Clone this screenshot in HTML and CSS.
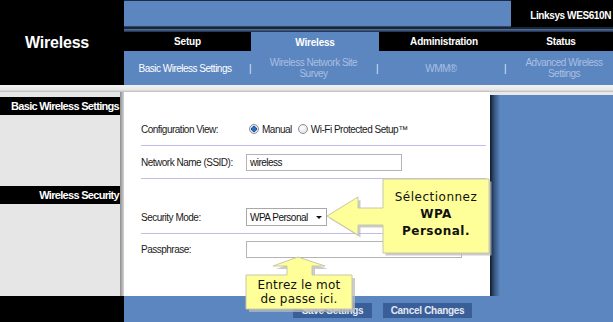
FILE: index.html
```html
<!DOCTYPE html>
<html lang="en">
<head>
<meta charset="utf-8">
<title>Wireless</title>
<link rel="stylesheet" href="styles.css">
</head>
<body>
<div class="page">
  <header class="brand-col"><h1 class="title">Wireless</h1></header>
  <div class="masthead">
    <div class="topbar"><div class="topbar-fill"></div><div class="model">Linksys WES610N</div></div>
    <div class="stripe"></div>
    <nav class="tabs">
      <div class="tab">Setup</div>
      <div class="tab active">Wireless</div>
      <div class="tab">Administration</div>
      <div class="tab">Status</div>
    </nav>
    <nav class="subnav">
      <div class="sub current">Basic Wireless Settings</div>
      <div class="sep">|</div>
      <div class="sub">Wireless Network Site<br>Survey</div>
      <div class="sep">|</div>
      <div class="sub">WMM®</div>
      <div class="sep">|</div>
      <div class="sub last">Advanced Wireless<br>Settings</div>
    </nav>
  </div>
  <div class="divider"></div>
  <aside class="sidebar">
    <div class="side-head">Basic Wireless Settings</div>
    <div class="side-head second">Wireless Security</div>
  </aside>
  <main class="content">
    <section class="form">
      <div class="row row-config">
        <span class="label">Configuration View:</span>
        <span class="radios">
          <span class="radio checked"></span><span class="rlabel">Manual</span>
          <span class="radio"></span><span class="rlabel">Wi-Fi Protected Setup™</span>
        </span>
      </div>
      <div class="rule r1"></div>
      <div class="row row-ssid">
        <span class="label">Network Name (SSID):</span>
        <span class="input ssid">wireless</span>
      </div>
      <div class="rule r2"></div>
      <div class="row row-mode">
        <span class="label">Security Mode:</span>
        <span class="select">WPA Personal<span class="caret"></span></span>
      </div>
      <div class="rule r3"></div>
      <div class="row row-pass">
        <span class="label">Passphrase:</span>
        <span class="input pass"></span>
      </div>
    </section>
    <div class="right-panel"></div>
  </main>
  <div class="foot-left"></div>
  <footer class="foot">
    <button class="btn save">Save Settings</button>
    <button class="btn cancel">Cancel Changes</button>
  </footer>

  <div class="callout callout-mode">
    <svg width="168" height="82" viewBox="0 0 168 82">
      <path d="M1,39 L32,20 L32,31 L57,31 L57,2 L163,2 L163,76 L57,76 L57,48 L32,48 L32,58 Z" fill="#b9b9b9" opacity="0.75" transform="translate(2.5,2.5)"/>
      <path d="M1,39 L32,20 L32,31 L57,31 L57,2 L163,2 L163,76 L57,76 L57,48 L32,48 L32,58 Z" fill="#ffff99" stroke="#c8c8a8" stroke-width="1"/>
    </svg>
    <div class="callout-text">Sélectionnez<br><b>WPA</b><br><b>Personal.</b></div>
  </div>
  <div class="callout callout-pass">
    <svg width="114" height="60" viewBox="0 0 114 60">
      <path d="M54,2 L81,11 L68,11 L68,20 L108,20 L108,54 L2,54 L2,20 L43,20 L43,11 L29,11 Z" fill="#b9b9b9" opacity="0.75" transform="translate(3,3)"/>
      <path d="M54,2 L81,11 L68,11 L68,20 L108,20 L108,54 L2,54 L2,20 L43,20 L43,11 L29,11 Z" fill="#ffff99" stroke="#c8c8a8" stroke-width="1"/>
    </svg>
    <div class="callout-text">Entrez le mot<br>de passe ici.</div>
  </div>
</div>
</body>
</html>
```

FILE: styles.css
```css
html, body {
  margin: 0;
  padding: 0;
  background: #fff;
}

.page {
  position: relative;
  width: 613px;
  height: 322px;
  display: grid;
  grid-template-columns: 124px 489px;
  grid-template-rows: 85px 7px 204px 26px;
  overflow: hidden;
  font-family: "Liberation Sans", Arial, sans-serif;
}

/* ---------- header ---------- */
.brand-col {
  background: #000;
  display: flex;
  align-items: center;
  justify-content: center;
  padding-right: 10px;
}

.title {
  margin: 0;
  font-size: 16px;
  font-weight: bold;
  color: #fff;
  letter-spacing: -0.2px;
}

.masthead {
  display: flex;
  flex-direction: column;
}

.topbar {
  height: 27px;
  display: flex;
}

.topbar-fill {
  flex: 1;
  background: #5c86bf;
  border-top: 1px solid #1d2b44;
  border-bottom: 1px solid #2f4566;
}

.model {
  width: 102px;
  box-sizing: border-box;
  background: #000;
  color: #fff;
  font-size: 10px;
  font-weight: bold;
  letter-spacing: -0.4px;
  display: flex;
  align-items: center;
  justify-content: flex-end;
  padding: 3px 2px 0 0;
}

.stripe {
  height: 5px;
  background: linear-gradient(#1b2538 0 2px, #5478ad 2px, #1f2c42 5px);
}

.tabs {
  height: 19px;
  display: grid;
  grid-template-columns: 127px 128px 130px 1fr;
  background: #000;
}

.tab {
  color: #fff;
  font-size: 10px;
  font-weight: bold;
  letter-spacing: -0.2px;
  display: flex;
  align-items: center;
  justify-content: center;
}

.tab.active {
  background: #5c86bf;
  padding-top: 2px;
}

.subnav {
  height: 34px;
  background: #5c86bf;
  display: grid;
  grid-template-columns: 122px 8px 119px 8px 120px 8px 1fr;
  align-items: center;
  font-size: 10px;
  letter-spacing: -0.5px;
  line-height: 11px;
}

.sub {
  text-align: center;
  color: #a9bfe3;
}

.sub.current {
  color: #fff;
}

.sub.last {
  padding-left: 6px;
}

.sep {
  text-align: center;
  color: #dce6f5;
}

.divider {
  grid-column: 1 / -1;
  background: linear-gradient(#f3f3f3, #e7e7e7 70%, #b9b9b9);
}

/* ---------- sidebar ---------- */
.sidebar {
  background: linear-gradient(to right, #e6e6e6 120px, #8d8d8d 120px, #d4d4d4 124px);
  padding-top: 5px;
}

.side-head {
  width: 120px;
  height: 18px;
  box-sizing: border-box;
  background: #000;
  color: #fff;
  font-size: 11px;
  font-weight: bold;
  letter-spacing: -0.7px;
  display: flex;
  align-items: center;
  justify-content: flex-end;
  padding-right: 1px;
}

.side-head.second {
  margin-top: 71px;
}

/* ---------- content ---------- */
.content {
  display: flex;
  background: #e9e9e9;
}

.form {
  width: 366px;
  box-sizing: border-box;
  background: #fff;
  padding: 28px 4px 0 17px;
  font-size: 10px;
  letter-spacing: -0.5px;
  color: #1a1a1a;
}

.right-panel {
  flex: 1;
  margin-top: 3px;
  background: linear-gradient(to right, #111b2a, #34507a 4px, #5c86bf 10px);
}

.row {
  display: grid;
  grid-template-columns: 105px auto;
  align-items: center;
  justify-items: start;
}

.row-config { height: 18px; }
.row-ssid { height: 17px; }
.row-mode { height: 18px; }
.row-pass { height: 17px; }

.rule {
  height: 1px;
  background: #c4bce8;
}

.r1 { margin: 7px 0 8px; }
.r2 { margin: 7px 0 29px; }
.r3 { margin: 7px 0 7px; }

.radios {
  display: flex;
  align-items: center;
  padding-left: 3px;
}

.radio {
  width: 10px;
  height: 10px;
  box-sizing: border-box;
  border-radius: 50%;
  border: 1px solid #8f9091;
  background: radial-gradient(circle at 40% 35%, #ffffff, #d9d9d9);
  margin-right: 3px;
}

.radio.checked {
  background: radial-gradient(circle, #2c6fbe 0 2px, #1c4f92 2.6px, #e8eef5 3px, #d0d6de);
}

.rlabel {
  margin-right: 6px;
}

.input {
  height: 17px;
  box-sizing: border-box;
  border: 1px solid #b4b4b4;
  background: #fff;
  display: flex;
  align-items: center;
  padding-left: 3px;
  color: #111;
}

.input.ssid { width: 156px; }
.input.pass { width: 216px; }

.select {
  position: relative;
  width: 81px;
  height: 18px;
  box-sizing: border-box;
  border: 1px solid #a9a9a9;
  background: #fff;
  display: flex;
  align-items: center;
  padding-left: 3px;
  color: #111;
}

.caret {
  position: absolute;
  right: 4px;
  top: 7px;
  width: 0;
  height: 0;
  border-left: 3px solid transparent;
  border-right: 3px solid transparent;
  border-top: 3px solid #111;
}

/* ---------- footer ---------- */
.foot-left {
  background: #000;
}

.foot {
  background: #5c86bf;
  display: flex;
  align-items: flex-start;
  gap: 11px;
  padding: 7px 0 0 169px;
}

.btn {
  height: 15px;
  border: none;
  margin: 0;
  padding: 0;
  background: #3a5f98;
  color: #e2e9f4;
  font-family: "Liberation Sans", Arial, sans-serif;
  font-size: 10px;
  font-weight: bold;
  letter-spacing: -0.3px;
}

.btn.save { width: 79px; }
.btn.cancel { width: 89px; }

/* ---------- callouts ---------- */
.callout {
  position: absolute;
}

.callout svg {
  position: absolute;
  left: 0;
  top: 0;
  display: block;
}

.callout-mode {
  left: 326px;
  top: 177px;
  width: 168px;
  height: 82px;
}

.callout-pass {
  left: 244px;
  top: 255px;
  width: 114px;
  height: 60px;
}

.callout-text {
  position: absolute;
  text-align: center;
  font-family: "DejaVu Sans", sans-serif;
  font-size: 12px;
  color: #111;
}

.callout-mode .callout-text {
  left: 57px;
  width: 106px;
  top: 12px;
  line-height: 17px;
  letter-spacing: 0.5px;
}

.callout-pass .callout-text {
  left: 2px;
  width: 106px;
  top: 23px;
  line-height: 14px;
  letter-spacing: 0.2px;
}
```
